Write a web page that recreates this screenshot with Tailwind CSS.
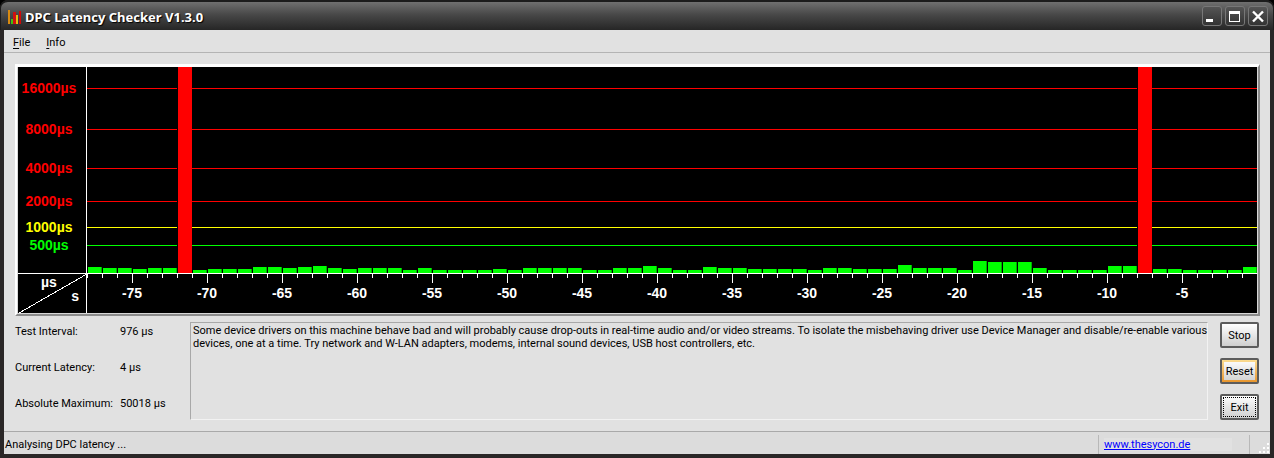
<!DOCTYPE html>
<html lang="en">
<head>
<meta charset="utf-8">
<title>DPC Latency Checker V1.3.0</title>
<script src="https://cdn.jsdelivr.net/npm/@tailwindcss/browser@4"></script>
</head>
<body class="bg-black">
<div class="flex min-h-screen flex-col overflow-hidden rounded-t-lg bg-[#2a2727] font-['Roboto',sans-serif] text-[11px] leading-[13px] text-black">
  <header class="flex h-[30px] items-center rounded-t-lg border-x border-t-2 border-[#1c1c1c] bg-linear-to-b from-[#707070] from-0% via-[#484848] via-45% to-[#262626] pt-[2px] pr-[5px] pl-[6px]">
    <svg class="h-4 w-4 shrink-0" viewBox="0 0 16 16" aria-hidden="true">
      <path fill="#d98a10" d="M1 1h2v14H1z"/><path fill="#3fc010" d="M4 10h2v5H4z"/><path fill="#d01010" d="M6 3h3v12H6z"/><path fill="#e0c010" d="M9 6h2v9H9z"/><path fill="#d00808" d="M12 2h2v13h-2z"/>
    </svg>
    <h1 class="ml-[2px] flex-1 font-['Noto_Sans',sans-serif] text-[13px] leading-4 font-bold text-white [text-shadow:1px_1px_1px_#000]">DPC Latency Checker V1.3.0</h1>
    <div class="flex gap-[3px] pb-[2px]">
      <button type="button" aria-label="Minimize" class="h-5 w-5 rounded-[3px] border border-[#777] bg-linear-to-b from-[#555] to-[#333]"><svg viewBox="0 0 18 18" class="block"><path fill="#fff" d="M3 12h7v3H3z"/></svg></button>
      <button type="button" aria-label="Maximize" class="h-5 w-5 rounded-[3px] border border-[#777] bg-linear-to-b from-[#555] to-[#333]"><svg viewBox="0 0 18 18" class="block"><path fill="#fff" fill-rule="evenodd" d="M3 4h11v11H3zM4 7v7h9V7z"/></svg></button>
      <button type="button" aria-label="Close" class="h-5 w-5 rounded-[3px] border border-[#777] bg-linear-to-b from-[#555] to-[#333]"><svg viewBox="0 0 18 18" class="block"><path stroke="#fff" stroke-width="2.400" d="M4 4.500l10 10M14 4.500l-10 10"/></svg></button>
    </div>
  </header>
  <div class="mx-1 mb-1 flex flex-1 flex-col bg-[#e1e1e1]">
    <nav class="flex h-[23px] items-center gap-4 border-b border-[#b4b4b4] pt-[2px] pl-[9px]">
      <button type="button"><span class="underline underline-offset-2">F</span>ile</button>
      <button type="button"><span class="underline underline-offset-2">I</span>nfo</button>
    </nav>
    <main class="flex flex-1 flex-col pt-[11px] pr-[10px] pl-[11px]">
      <section aria-label="DPC latency chart" class="border-t-3 border-r-2 border-b-2 border-l-2 border-t-white border-r-[#8c8c8c] border-b-[#8c8c8c] border-l-white">
        <div class="flex border-r border-b border-l border-[#d8d8d8] bg-black font-['Liberation_Sans',sans-serif] text-[14px] leading-4 font-bold">
          <div class="w-[68px] shrink-0">
            <div class="flex h-[206px] flex-col pr-[6px] text-center text-[#f00]">
              <span class="mt-[13px]">16000µs</span>
              <span class="mt-[25px]">8000µs</span>
              <span class="mt-[23px]">4000µs</span>
              <span class="mt-[17px]">2000µs</span>
              <span class="mt-[10px] text-[#ff0]">1000µs</span>
              <span class="mt-[2px] text-[#0f0]">500µs</span>
            </div>
            <div class="relative h-10 border-t border-white text-white">
              <svg class="absolute inset-0 h-full w-full" viewBox="0 0 68 39" preserveAspectRatio="none" shape-rendering="crispEdges" aria-hidden="true"><path stroke="#fff" d="M1 39L68 0.500"/></svg>
              <span class="block pl-[23px]">µs</span>
              <span class="block pr-[7px] text-right leading-3">s</span>
            </div>
          </div>
          <div class="flex min-w-0 flex-1 flex-col border-l border-white">
            <div class="grid h-[206px]">
              <div class="col-start-1 row-start-1 flex flex-col">
                <div class="mt-[21px] h-px bg-[#f00]"></div>
                <div class="mt-10 h-px bg-[#f00]"></div>
                <div class="mt-[38px] h-px bg-[#f00]"></div>
                <div class="mt-8 h-px bg-[#f00]"></div>
                <div class="mt-[25px] h-px bg-[#ff0]"></div>
                <div class="mt-[17px] h-px bg-[#0f0]"></div>
              </div>
              <div id="bars" class="col-start-1 row-start-1 flex h-[206px] items-end"></div>
            </div>
            <div id="axis" class="flex h-10 border-t border-white text-white"></div>
          </div>
        </div>
      </section>
      <section class="mt-[6px] flex flex-1">
        <dl class="grid w-[175px] shrink-0 auto-rows-[13px] grid-cols-[105px_1fr] content-start gap-y-[23px] pt-[3px]">
          <dt>Test Interval:</dt><dd>976 µs</dd>
          <dt>Current Latency:</dt><dd>4 µs</dd>
          <dt>Absolute Maximum:</dt><dd>50018 µs</dd>
        </dl>
        <p class="mb-[11px] min-w-0 flex-1 border border-t-[#a8a8a8] border-r-[#f2f2f2] border-b-[#f2f2f2] border-l-[#a8a8a8] pt-px pl-[2px]"><span class="-mr-2 block">Some device drivers on this machine behave bad and will probably cause drop-outs in real-time audio and/or video streams. To isolate the misbehaving driver use Device Manager and disable/re-enable various devices, one at a time. Try network and W-LAN adapters, modems, internal sound devices, USB host controllers, etc.</span></p>
        <div class="mr-px ml-3 flex w-[39px] flex-col gap-[10px]">
          <button type="button" class="h-[26px] rounded-[2px] border-2 border-[#5c5c5c] bg-linear-to-b from-white to-[#cfcfcf]">Stop</button>
          <button type="button" class="flex h-[26px] rounded-[2px] border-2 border-[#5c5c5c] bg-linear-to-b from-[#fbdc90] to-[#e8962c] p-[2px]"><span class="flex h-full w-full items-center justify-center bg-linear-to-b from-[#fafafa] to-[#d4d4d4]">Reset</span></button>
          <button type="button" class="h-[26px] rounded-[2px] border-2 border-[#5c5c5c] bg-linear-to-b from-white to-[#cfcfcf] outline outline-dotted outline-black -outline-offset-4">Exit</button>
        </div>
      </section>
    </main>
    <footer class="flex h-[23px] items-center border-t border-[#a9a9a9] bg-[#dcdcdc] pt-[2px]">
      <span class="flex-1 pl-px">Analysing DPC latency ...</span>
      <div class="flex h-[19px] w-[151px] items-center border-l border-[#b8b8b8] pl-[5px]">
        <a href="http://www.thesycon.de" class="w-[128px] bg-[#e1e1e1] text-[#00f] underline">www.thesycon.de</a>
      </div>
      <div class="flex h-[19px] w-[21px] items-end justify-end border-l border-[#b8b8b8]">
        <svg class="h-3 w-3" viewBox="0 0 12 12" aria-hidden="true"><path fill="#fff" d="M9 1h2v2H9zM5 5h2v2H5zM9 5h2v2H9zM1 9h2v2H1zM5 9h2v2H5zM9 9h2v2H9z"/></svg>
      </div>
    </footer>
  </div>
</div>
<script>
  // Bar heights in pixels, one per second; 206 fills the plot.
  const heights = [6,5,5,4,5,5,206,3,4,4,4,6,6,5,6,7,5,4,5,5,5,3,5,3,3,3,3,4,3,5,5,5,5,3,3,5,5,7,5,3,3,6,5,5,4,4,4,4,3,5,5,4,4,4,8,5,5,5,3,12,11,11,11,5,3,3,3,3,7,7,206,4,4,3,3,3,3,6];
  const bars = document.getElementById('bars');
  const axis = document.getElementById('axis');
  heights.forEach((h, i) => {
    const bar = document.createElement('div');
    bar.className = h > 200 ? 'flex-1 border-l border-l-black border-r border-r-[#f00] bg-[#f00]' : 'flex-1 border-l border-l-black border-r border-r-[#00b000] bg-[#0f0]';
    bar.style.height = h + 'px';
    bars.append(bar);
    const second = i - 78;
    const cell = document.createElement('div');
    cell.className = 'flex w-0 min-w-0 flex-1 flex-col items-start';
    const tick = document.createElement('div');
    tick.className = second % 5 === 0 ? 'h-[9px] w-px bg-white' : 'h-1 w-px bg-white';
    cell.append(tick);
    if (second % 5 === 0) {
      const label = document.createElement('span');
      label.className = 'mt-[2px] -ml-5 w-10 shrink-0 text-center';
      label.textContent = second;
      cell.append(label);
    }
    axis.append(cell);
  });
</script>
</body>
</html>
